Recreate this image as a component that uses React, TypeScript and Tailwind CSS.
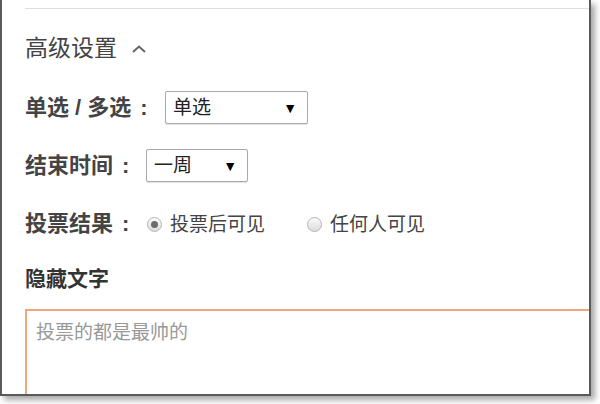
import React, { useState } from 'react';

const font = { fontFamily: '"Liberation Sans", "Noto Sans CJK SC", sans-serif' };

const Select: React.FC<{ value: string; width: string }> = ({ value, width }) => (
  <div
    className={`flex h-[33px] items-center justify-between rounded-[2px] border border-[#a9a9a9] bg-white pl-[7px] pr-[10px] shadow-[0_1px_1px_rgba(0,0,0,0.12)] ${width}`}
  >
    <span className="text-[19px] leading-none text-[#222]">{value}</span>
    <span className="text-[14px] leading-none text-black">▼</span>
  </div>
);

const Radio: React.FC<{ checked: boolean; label: string; onClick: () => void }> = ({ checked, label, onClick }) => (
  <button onClick={onClick} className="flex items-center gap-[8px]">
    <span className="flex h-[15px] w-[15px] items-center justify-center rounded-full border border-[#b5b5b5] bg-gradient-to-b from-[#fafafa] to-[#dcdcdc]">
      {checked && <span className="h-[7px] w-[7px] rounded-full bg-[#6b6b6b]" />}
    </span>
    <span className="text-[19px] leading-none text-[#444]">{label}</span>
  </button>
);

const Label: React.FC<{ text: string; width: string }> = ({ text, width }) => (
  <span className={`flex items-center text-[22px] font-bold leading-none text-[#444] ${width}`}>
    {text}
    <span className="ml-[9px]">:</span>
  </span>
);

export default function App() {
  const [result, setResult] = useState<'after' | 'anyone'>('after');

  return (
    <div className="h-[404px] w-[600px] bg-white" style={font}>
      <div className="h-[396px] w-[591px] overflow-hidden border-b-2 border-l-2 border-r-2 border-[#5a5a5a] bg-white shadow-[4px_4px_6px_rgba(0,0,0,0.35)]">
        <div className="flex flex-col pl-[23px] pt-[8px]">
          <div className="h-px bg-[#dedede]" />

          <div className="mt-[24px] flex h-[30px] items-center gap-[14px]">
            <span className="text-[23px] leading-none text-[#444]">高级设置</span>
            <svg width="16" height="10" viewBox="0 0 16 10" className="mt-[2px]">
              <path d="M2 8 L8 2.5 L14 8" fill="none" stroke="#666" strokeWidth="2" />
            </svg>
          </div>

          <div className="mt-[28px] flex h-[33px] items-center">
            <Label text="单选 / 多选" width="w-[140px]" />
            <Select value="单选" width="w-[143px]" />
          </div>

          <div className="mt-[25px] flex h-[33px] items-center">
            <Label text="结束时间" width="w-[121px]" />
            <Select value="一周" width="w-[102px]" />
          </div>

          <div className="mt-[26px] flex h-[32px] items-center">
            <Label text="投票结果" width="w-[122px]" />
            <div className="flex items-center gap-[42px]">
              <Radio checked={result === 'after'} label="投票后可见" onClick={() => setResult('after')} />
              <Radio checked={result === 'anyone'} label="任何人可见" onClick={() => setResult('anyone')} />
            </div>
          </div>

          <div className="mt-[23px] flex h-[30px] items-center">
            <span className="text-[21px] font-bold leading-none text-[#333]">隐藏文字</span>
          </div>

          <textarea
            className="mt-[16px] h-[120px] w-[600px] resize-none border-2 border-[#f0a57e] px-[9px] pt-[10px] text-[19px] leading-[24px] text-[#333] outline-none placeholder:text-[#999]"
            placeholder="投票的都是最帅的"
          />
        </div>
      </div>
    </div>
  );
}
